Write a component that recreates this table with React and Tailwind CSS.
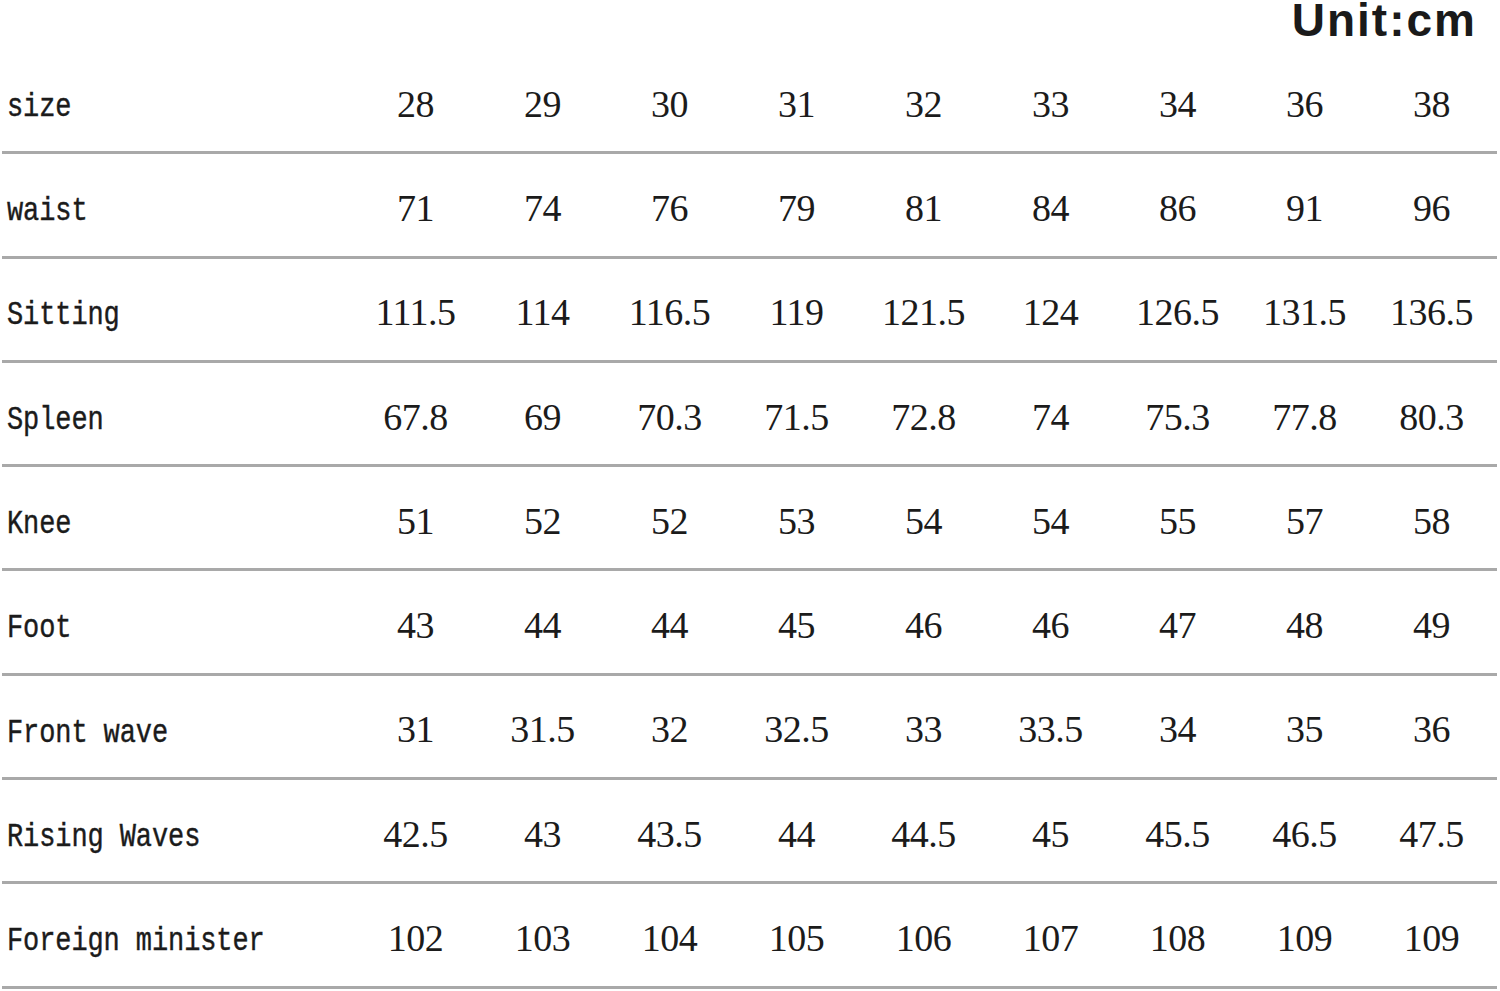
const sizes = ['28', '29', '30', '31', '32', '33', '34', '36', '38']

const rows = [
  { label: 'waist', values: ['71', '74', '76', '79', '81', '84', '86', '91', '96'] },
  { label: 'Sitting', values: ['111.5', '114', '116.5', '119', '121.5', '124', '126.5', '131.5', '136.5'] },
  { label: 'Spleen', values: ['67.8', '69', '70.3', '71.5', '72.8', '74', '75.3', '77.8', '80.3'] },
  { label: 'Knee', values: ['51', '52', '52', '53', '54', '54', '55', '57', '58'] },
  { label: 'Foot', values: ['43', '44', '44', '45', '46', '46', '47', '48', '49'] },
  { label: 'Front wave', values: ['31', '31.5', '32', '32.5', '33', '33.5', '34', '35', '36'] },
  { label: 'Rising Waves', values: ['42.5', '43', '43.5', '44', '44.5', '45', '45.5', '46.5', '47.5'] },
  { label: 'Foreign minister', values: ['102', '103', '104', '105', '106', '107', '108', '109', '109'] },
]

function Row({ label, values }) {
  return (
    <div className="flex h-[104.3px] border-b-[3px] border-[#a9a9a9] pt-[7px]">
      <div className="w-[350px] flex items-center pt-[8px] pl-[5px]">
        <span className="inline-block scale-y-[1.2] font-['Liberation_Mono',monospace] text-[27px] tracking-[-0.1px] text-[#1b1b1b] [-webkit-text-stroke:0.35px_#1b1b1b] whitespace-pre">
          {label}
        </span>
      </div>
      {values.map((v, i) => (
        <div
          key={i}
          className="w-[127px] flex items-center justify-center font-['Liberation_Serif',serif] text-[38px] tracking-[-0.5px] text-[#1b1b1b]"
        >
          {v}
        </div>
      ))}
    </div>
  )
}

export default function App() {
  return (
    <div className="w-[1500px] h-[991px] bg-white overflow-hidden">
      <div className="h-[50px] flex justify-end items-start pr-[23px]">
        <span className="font-['Liberation_Sans',sans-serif] font-bold text-[46px] leading-[40px] tracking-[2px] text-[#1a1a1a]">
          Unit:cm
        </span>
      </div>
      <div className="ml-[2px] w-[1495px]">
        <Row label="size" values={sizes} />
        {rows.map((r) => (
          <Row key={r.label} label={r.label} values={r.values} />
        ))}
      </div>
    </div>
  )
}
